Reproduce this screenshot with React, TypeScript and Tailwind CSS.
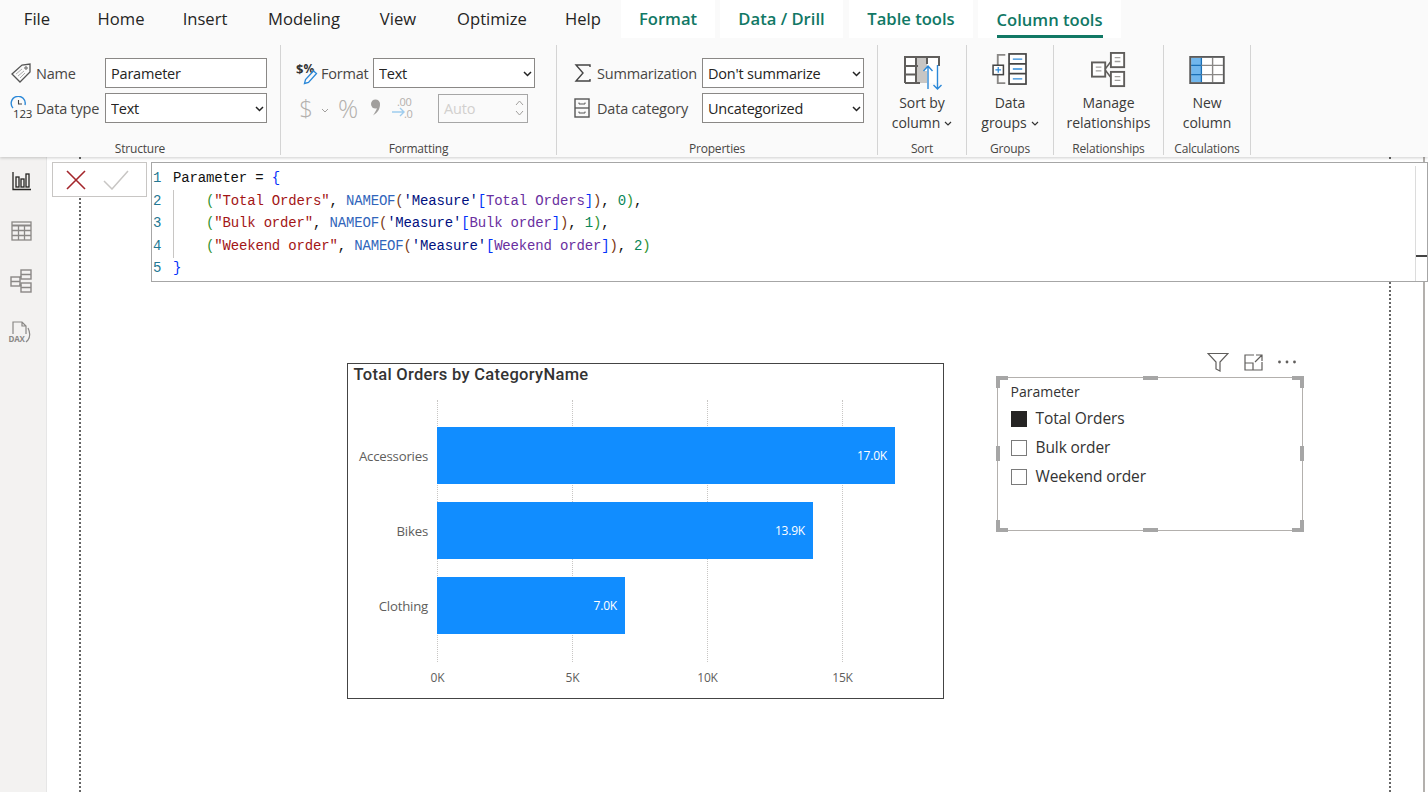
import React from "react";

const G = ({ c = "#605e5c", children, w, h, className = "" }: any) => (
  <svg width={w} height={h} viewBox={`0 0 ${w} ${h}`} fill="none" stroke={c} className={className}>{children}</svg>
);

const TagIcon = () => (
  <G w={22} h={22} c="#555">
    <path d="M2 12 L12 3 L20 2 L20 10 L10 20 Z" strokeWidth="1.3" />
    <circle cx="16" cy="6" r="1.2" strokeWidth="1" />
    <path d="M6 12 L12 7 M8 14 L14 9 M10 16 L15 11" strokeWidth="0.8" stroke="#999" />
  </G>
);
const TypeIcon = () => (
  <svg width="24" height="26" viewBox="0 0 24 26" fill="none">
    <path d="M3 12 A7 7 0 1 1 15 9" stroke="#2b88d8" strokeWidth="1.4" />
    <path d="M8.5 4 V8 H12" stroke="#444" strokeWidth="1.1" />
    <text x="3" y="22" fontSize="11.5" fill="#333" fontFamily="'Open Sans', sans-serif">123</text>
  </svg>
);
const FormatIcon = () => (
  <svg width="22" height="24" viewBox="0 0 22 24" fill="none">
    <text x="0" y="13" fontSize="13" fontWeight="700" fill="#333" fontFamily="'Open Sans', sans-serif">$</text>
    <text x="7.5" y="12" fontSize="12" fontWeight="700" fill="#333" fontFamily="'Open Sans', sans-serif">%</text>
    <path d="M8.5 22.5 L9.5 18.5 L17.5 10 L20.5 12.5 L12.5 21.5 Z" stroke="#2b88d8" strokeWidth="1.3" fill="#fafafa" />
  </svg>
);
const SigmaIcon = () => (
  <G w={18} h={20} c="#444">
    <path d="M16 4 V2 H2 L9 10 L2 18 H16 V16" strokeWidth="1.4" />
  </G>
);
const CabinetIcon = () => (
  <G w={16} h={20} c="#555">
    <rect x="1" y="1" width="14" height="18" strokeWidth="1.4" />
    <path d="M1 10 H15" strokeWidth="1.3" />
    <path d="M5 4.5 V6 H11 V4.5 M5 13.5 V15 H11 V13.5" strokeWidth="1" />
  </G>
);
const SortIcon = () => (
  <svg width="39" height="34" viewBox="0 0 39 34" fill="none">
    <rect x="1" y="1" width="34" height="26" fill="#fff" />
    <rect x="12" y="1" width="11" height="26" fill="#c8c6c4" />
    <path d="M1 27 V1 H35 V10 M1 10 H14 M1 18.5 H12 M1 27 H16 M12 1 V27 M23 1 V8" stroke="#605e5c" strokeWidth="2" />
    <path d="M24 33 V10 M19.5 15 L24 10 L28.5 15" stroke="#2b88d8" strokeWidth="1.4" fill="#fff" />
    <path d="M33.5 9 V33 M29.5 29 L33.5 33 L37.5 29" stroke="#2b88d8" strokeWidth="1.4" />
  </svg>
);
const GroupsIcon = () => (
  <svg width="36" height="32" viewBox="0 0 38 34" fill="none">
    <path d="M14 2 H6 V13 M6 23 V32 H14" stroke="#8a8886" strokeWidth="2" />
    <rect x="1" y="13" width="11" height="10" fill="#fff" stroke="#444" strokeWidth="1.6" />
    <path d="M3.5 18 H9.5 M6.5 15 V21" stroke="#2b88d8" strokeWidth="1.3" />
    <rect x="18" y="1" width="18" height="32" fill="#fff" stroke="#444" strokeWidth="1.8" />
    <path d="M18 11.5 H36 M18 22 H36" stroke="#444" strokeWidth="1.8" />
    <path d="M22 6.5 H32 M22 17 H32 M22 27.5 H32" stroke="#2b88d8" strokeWidth="1.4" />
  </svg>
);
const RelIcon = () => (
  <svg width="36" height="36" viewBox="0 0 38 38" fill="none">
    <rect x="21" y="1" width="14" height="15" fill="#fff" stroke="#605e5c" strokeWidth="2" />
    <rect x="21" y="21" width="14" height="15" fill="#fff" stroke="#605e5c" strokeWidth="2" />
    <rect x="1" y="11" width="14" height="15" fill="#fff" stroke="#605e5c" strokeWidth="2" />
    <path d="M15 18 L21 10 M15 19 L21 27" stroke="#605e5c" strokeWidth="1.6" />
    <path d="M25 6 H31 M25 10 H31 M25 26 H31 M25 30 H31 M5 16 H11 M5 20 H11" stroke="#a19f9d" strokeWidth="1.4" />
  </svg>
);
const NewColIcon = () => (
  <svg width="36" height="28" viewBox="0 0 38 30" fill="none">
    <rect x="1" y="1" width="36" height="28" fill="#fff" />
    <rect x="2" y="2" width="11" height="26" fill="#71b7ed" />
    <path d="M13 2 V28 M2 10 H13 M2 20 H13" stroke="#1a6fb5" strokeWidth="1.4" />
    <path d="M13 10 H36 M13 20 H36 M25 2 V28" stroke="#8a8886" strokeWidth="1.5" />
    <rect x="1" y="1" width="36" height="28" stroke="#5a5a5a" strokeWidth="2" />
  </svg>
);

const Caret = () => (
  <svg width="8" height="5" viewBox="0 0 8 5" fill="none" className="inline-block ml-1 mb-[2px]">
    <path d="M1 1 L4 4 L7 1" stroke="#333" strokeWidth="1.2" />
  </svg>
);

const tabsPlain = [
  ["File", "w-[74px]"],
  ["Home", "w-[94px]"],
  ["Insert", "w-[74px]"],
  ["Modeling", "w-[124px]"],
  ["View", "w-[64px]"],
  ["Optimize", "w-[124px]"],
  ["Help", "w-[58px]"],
];

const Field = "h-[30px] border border-[#8a8886] bg-white text-[14.5px] text-[#252423] pl-[5px] pt-[1px] outline-none";

function Select({ value }: { value: string }) {
  return (
    <div className="relative w-[162px] h-[30px] shrink-0">
      <select defaultValue={value} className={`${Field} w-full appearance-none`}>
        <option>{value}</option>
      </select>
      <svg width="9" height="6" viewBox="0 0 9 6" fill="none" className="absolute right-[3px] top-[13px] pointer-events-none">
        <path d="M1 1 L4.5 4.5 L8 1" stroke="#222" strokeWidth="1.5" />
      </svg>
    </div>
  );
}

function Group({ w, label, children }: any) {
  return (
    <div className={`${w} h-[110px] mt-[45px] border-r border-[#d4d4d4] flex flex-col shrink-0`}>
      <div className="flex-1 min-h-0">{children}</div>
      <div className="h-[13px] text-center text-[12px] leading-[13px] text-[#484644]">{label}</div>
    </div>
  );
}

function BigButton({ icon, l1, l2, caret, pad }: any) {
  return (
    <div className="flex flex-col items-center tracking-[-0.05px]">
      <div className={`h-[48px] flex items-start justify-center ${pad}`}>{icon}</div>
      <div className="text-[14px] leading-[20px] text-center text-[#3b3a39] whitespace-nowrap">{l1}</div>
      <div className="text-[14px] leading-[20px] text-center text-[#3b3a39] whitespace-nowrap">
        {l2}
        {caret && <Caret />}
      </div>
    </div>
  );
}

const S = ({ c, children }: any) => <span style={{ color: c }}>{children}</span>;
const BLUE = "#0431fa";
const GRN = "#319331";
const BRN = "#7b3814";
const STR = "#a31515";
const FN = "#3165bb";
const TBL = "#001080";
const COL = "#6a2fa0";
const NUM = "#098658";

function MeasureLine({ text, name, num, comma }: any) {
  return (
    <span className="ml-[33px]">
      <S c={GRN}>(</S>
      <S c={STR}>"{text}"</S>, <S c={FN}>NAMEOF</S>
      <S c={BRN}>(</S>
      <S c={TBL}>'Measure'</S>
      <S c={BLUE}>[</S>
      <S c={COL}>{name}</S>
      <S c={BLUE}>]</S>
      <S c={BRN}>)</S>, <S c={NUM}>{num}</S>
      <S c={GRN}>)</S>
      {comma ? "," : ""}
    </span>
  );
}

const codeLines = [
  <>Parameter = <S c={BLUE}>{"{"}</S></>,
  <MeasureLine text="Total Orders" name="Total Orders" num="0" comma />,
  <MeasureLine text="Bulk order" name="Bulk order" num="1" comma />,
  <MeasureLine text="Weekend order" name="Weekend order" num="2" />,
  <S c={BLUE}>{"}"}</S>,
];

const bars = [
  { name: "Accessories", value: "17.0K", width: 458 },
  { name: "Bikes", value: "13.9K", width: 376 },
  { name: "Clothing", value: "7.0K", width: 188 },
];
const ticks = ["0K", "5K", "10K", "15K"];

function Handle({ className }: { className: string }) {
  return <div className={`absolute bg-[#a6a6a6] ${className}`} />;
}

function Check({ on, label }: { on?: boolean; label: string }) {
  return (
    <div className="flex items-center h-[29px]">
      <div className={`w-[16px] h-[16px] border ${on ? "bg-[#252423] border-[#252423]" : "bg-white border-[#7a7a7a]"}`} />
      <span className="ml-[9px] text-[15.5px] tracking-[-0.1px] text-[#333]">{label}</span>
    </div>
  );
}

export default function App() {
  return (
    <div className="w-[1428px] h-[792px] overflow-hidden bg-white flex flex-col font-['Open_Sans',sans-serif] tracking-[-0.2px]">
      {/* Ribbon */}
      <header className="relative z-10 h-[157px] bg-[#fafafa] shadow-[0_1px_3px_rgba(0,0,0,0.2)] shrink-0">
        <nav className="absolute left-0 top-0 flex h-[38px] items-center tracking-normal">
          {tabsPlain.map(([t, w]) => (
            <div key={t} className={`${w} text-center text-[16.6px] text-[#252423] pt-[1px]`}>{t}</div>
          ))}
          <div className="ml-[9px] w-[94px] h-[38px] bg-white flex items-center justify-center pt-[1px] text-[16.6px] font-semibold text-[#117865]">Format</div>
          <div className="ml-[5px] w-[123px] h-[38px] bg-white flex items-center justify-center pt-[1px] text-[16.6px] font-semibold text-[#117865]">Data / Drill</div>
          <div className="ml-[6px] w-[124px] h-[38px] bg-white flex items-center justify-center pt-[1px] text-[16.6px] font-semibold text-[#117865]">Table tools</div>
          <div className="ml-[5px] w-[143px] h-[38px] bg-white flex justify-center">
            <div className="h-[38px] pt-[9px] border-b-[3px] border-[#117865] mb-[2px] text-[16.6px] leading-[22px] font-semibold text-[#117865] w-[106px] flex justify-center whitespace-nowrap">Column tools</div>
          </div>
        </nav>
        <div className="flex">
          <Group w="w-[281px]" label="Structure">
            <div className="pt-[13px] pl-[10px] flex flex-col gap-[5px]">
              <div className="flex items-center h-[30px]">
                <div className="w-[26px]"><TagIcon /></div>
                <span className="w-[69px] pt-[1px] text-[14.5px] text-[#484644]">Name</span>
                <input readOnly value="Parameter" className={`${Field} w-[162px]`} />
              </div>
              <div className="flex items-center h-[30px]">
                <div className="w-[26px] mt-[2px]"><TypeIcon /></div>
                <span className="w-[69px] pt-[1px] text-[14.5px] text-[#484644] whitespace-nowrap">Data type</span>
                <Select value="Text" />
              </div>
            </div>
          </Group>
          <Group w="w-[276px]" label="Formatting">
            <div className="pt-[13px] pl-[15px] flex flex-col gap-[5px]">
              <div className="flex items-center h-[30px]">
                <div className="w-[25px]"><FormatIcon /></div>
                <span className="w-[52px] pt-[1px] text-[14.5px] text-[#484644]">Format</span>
                <Select value="Text" />
              </div>
              <div className="flex items-center h-[30px] text-[#b3b0ad]">
                <span className="w-[20px] text-[24px] leading-[30px] font-light text-center">$</span>
                <svg width="8" height="5" viewBox="0 0 8 5" fill="none" className="ml-[5px] mt-[4px]"><path d="M1 1 L4 4 L7 1" stroke="#a19f9d" /></svg>
                <span className="ml-[6px] w-[26px] text-[25px] leading-[30px] font-light text-center">%</span>
                <svg width="11" height="17" viewBox="0 0 11 17" fill="#a19f9d" className="ml-[9px] mb-[1px]">
                  <circle cx="5.5" cy="5" r="4.5" />
                  <path d="M7 1 C11.5 4 11 12 3 16.5 C6 12 7 10 7 8 Z" />
                </svg>
                <svg width="24" height="28" viewBox="0 0 24 28" fill="none" className="ml-[10px]">
                  <text x="6" y="12" fontSize="11" letterSpacing="-0.3" fill="#b3b0ad">.00</text>
                  <text x="13" y="24" fontSize="11" letterSpacing="-0.3" fill="#b3b0ad">.0</text>
                  <path d="M1 18 H13 M9 14 L13 18 L9 22" stroke="#9fcdee" strokeWidth="1.4" />
                </svg>
                <div className="ml-[23px] w-[90px] h-[29px] border border-[#a6a6a6] bg-[#fafafa] flex items-center">
                  <span className="flex-1 pl-[5px] pt-[1px] text-[14.5px] text-[#d2d0ce]">Auto</span>
                  <div className="w-[16px] flex flex-col gap-[4px] items-center">
                    <svg width="9" height="6" viewBox="0 0 9 6" fill="none"><path d="M1 5 L4.5 1 L8 5" stroke="#a19f9d" /></svg>
                    <svg width="9" height="6" viewBox="0 0 9 6" fill="none"><path d="M1 1 L4.5 5 L8 1" stroke="#a19f9d" /></svg>
                  </div>
                </div>
              </div>
            </div>
          </Group>
          <Group w="w-[321px]" label="Properties">
            <div className="pt-[13px] pl-[17px] flex flex-col gap-[5px]">
              <div className="flex items-center h-[30px]">
                <div className="w-[23px]"><SigmaIcon /></div>
                <span className="w-[105px] pt-[1px] text-[14.5px] text-[#484644] whitespace-nowrap">Summarization</span>
                <Select value="Don't summarize" />
              </div>
              <div className="flex items-center h-[30px]">
                <div className="w-[23px]"><CabinetIcon /></div>
                <span className="w-[105px] pt-[1px] text-[14.5px] text-[#484644] whitespace-nowrap">Data category</span>
                <Select value="Uncategorized" />
              </div>
            </div>
          </Group>
          <Group w="w-[89px]" label="Sort"><BigButton pad="pt-[11px] pl-[2px]" icon={<SortIcon />} l1="Sort by" l2="column" caret /></Group>
          <Group w="w-[87px]" label="Groups"><BigButton pad="pt-[8px]" icon={<GroupsIcon />} l1="Data" l2="groups" caret /></Group>
          <Group w="w-[110px]" label="Relationships"><BigButton pad="pt-[7px]" icon={<RelIcon />} l1="Manage" l2="relationships" /></Group>
          <Group w="w-[87px]" label="Calculations"><BigButton pad="pt-[11px]" icon={<NewColIcon />} l1="New" l2="column" /></Group>
        </div>
      </header>

      {/* Body */}
      <div className="flex flex-1 min-h-0">
        <aside className="w-[47px] shrink-0 bg-[#f3f2f1] border-r border-[#e6e6e6] flex flex-col items-center pt-[14px] gap-[30px] pr-[3px]">
          <svg width="20" height="20" viewBox="0 0 20 20" fill="none" stroke="#252423" strokeWidth="1.3">
            <path d="M1 1 V18.5 H19" /><rect x="4" y="6" width="3" height="10" /><rect x="9" y="8" width="3" height="8" /><rect x="14" y="3" width="3" height="13" />
          </svg>
          <svg width="21" height="20" viewBox="0 0 21 20" fill="none" stroke="#8a8886" strokeWidth="1.3">
            <rect x="1" y="1" width="19" height="18" /><path d="M1 4.5 H20" strokeWidth="2" /><path d="M1 9.5 H20 M1 14.5 H20 M7.5 4.5 V19 M13.5 4.5 V19" />
          </svg>
          <svg width="23" height="24" viewBox="0 0 23 24" fill="none" stroke="#8a8886" strokeWidth="1.4" className="mt-[-2px]">
            <rect x="1" y="8" width="9" height="9" /><rect x="11" y="1" width="10" height="9" /><rect x="11" y="14" width="10" height="9" />
            <path d="M1 12.5 H10 M11 5.5 H21 M11 18.5 H21 M10 9 L11 7 M10 15 L11 17" />
          </svg>
          <svg width="24" height="24" viewBox="0 0 24 24" fill="none" stroke="#8a8886" strokeWidth="1.2" className="mt-[-3px] -translate-x-[2px]">
            <path d="M5 14 V2 H14 L18 6 V14 M14 2 V6 H18" />
            <path d="M20 8 C22 12 22 17 20 20 L18 22" />
            <text x="0.5" y="22" fontSize="8" fontWeight="700" fill="#8a8886" stroke="none" fontFamily="'Open Sans', sans-serif">DAX</text>
          </svg>
        </aside>

        <main className="relative flex-1 bg-white overflow-hidden">
          {/* page bounds */}
          <div className="absolute left-[32px] top-0 bottom-0 border-l-2 border-dotted border-[#666]" />
          <div className="absolute left-[1342px] top-0 bottom-0 border-l-2 border-dotted border-[#666]" />
          <div className="absolute left-[1376px] top-0 bottom-0 w-[1.5px] bg-[#b3b0ad]" />

          {/* formula bar */}
          <div className="absolute left-[5px] top-[5px] right-0 flex items-start z-10">
            <div className="w-[95px] h-[35px] bg-white border border-[#c8c6c4] flex items-center pl-[13px] gap-[17px] shrink-0">
              <svg width="20" height="20" viewBox="0 0 20 20" fill="none"><path d="M1 1 L19 19 M19 1 L1 19" stroke="#a4262c" strokeWidth="1.6" /></svg>
              <svg width="26" height="20" viewBox="0 0 26 20" fill="none"><path d="M1 11 L9 19 L25 1" stroke="#c8c6c4" strokeWidth="1.5" /></svg>
            </div>
            <div className="relative ml-[4px] flex-1 h-[120px] bg-white border border-[#a6a6a6] pt-[4px] font-['Liberation_Mono',monospace] text-[14px] leading-[22.5px] tracking-[-0.17px] text-[#111]">
              {codeLines.map((l, i) => (
                <div key={i} className="flex h-[22.5px] whitespace-pre">
                  <span className="w-[21px] pl-[1px] text-[#237893] shrink-0">{i + 1}</span>
                  <span>{l}</span>
                </div>
              ))}
              <div className="absolute left-[21px] top-[27px] h-[68px] w-[1px] bg-[#c8c6c4]" />
              <div className="absolute right-0 top-[3px] bottom-0 w-[12px] border-l border-[#dcdcdc]" />
              <div className="absolute right-0 top-[92px] h-[2px] w-[11px] bg-[#444]" />
            </div>
          </div>

          {/* chart */}
          <section className="absolute left-[300px] top-[206px] w-[597px] h-[336px] border-[1.5px] border-[#444] bg-white">
            <h2 className="absolute left-[5.5px] top-[0px] text-[16.5px] leading-[21px] font-medium tracking-[0.3px] text-[#333] font-['Roboto',sans-serif] whitespace-nowrap">Total Orders by CategoryName</h2>
            {[0, 135, 270, 405].map((x) => (
              <div key={x} style={{ left: 89 + x }} className="absolute top-[36px] h-[262px] border-l border-dotted border-[#c8c6c4]" />
            ))}
            <div className="absolute left-0 right-0 top-[63px] flex flex-col gap-[18px]">
              {bars.map((b) => (
                <div key={b.name} className="flex items-center h-[57px]">
                  <div className="w-[80px] pt-[2px] text-right text-[13.2px] text-[#605e5c] whitespace-nowrap">{b.name}</div>
                  <div style={{ width: b.width }} className="ml-[9px] h-[57px] bg-[#118dff] flex items-center justify-end pr-[8px] text-[12px] font-medium text-white">{b.value}</div>
                </div>
              ))}
            </div>
            <div className="absolute left-[89px] top-[305px] flex">
              {ticks.map((t) => (
                <div key={t} className="w-[135px] text-[12px] text-[#605e5c] -translate-x-[67px] text-center">{t}</div>
              ))}
            </div>
          </section>

          {/* slicer toolbar */}
          <div className="absolute left-[1160px] top-[195px] w-[90px] flex items-center justify-between">
            <svg width="22" height="20" viewBox="0 0 22 20" fill="none" stroke="#605e5c" strokeWidth="1.2"><path d="M1 1.5 H21 L13 10 V19 L9 17 V10 Z" /></svg>
            <svg width="19" height="17" viewBox="0 0 19 17" fill="none" stroke="#605e5c" strokeWidth="1.2"><path d="M10 1 H1 V16 H18 V8 M1 9 H9 V16 M12 1 H18 V7 M18 1 L11 8" /></svg>
            <svg width="20" height="4" viewBox="0 0 20 4" fill="#605e5c"><circle cx="2.5" cy="2" r="1.4" /><circle cx="10" cy="2" r="1.4" /><circle cx="17.5" cy="2" r="1.4" /></svg>
          </div>

          {/* slicer */}
          <section className="absolute left-[950px] top-[220px] w-[306px] h-[154px] border-[1.5px] border-[#b3b0ad] bg-white pl-[12.5px] pt-[4px]">
            <div className="text-[14px] leading-[20px] tracking-normal text-[#333] mb-[2px]">Parameter</div>
            <Check on label="Total Orders" />
            <Check label="Bulk order" />
            <Check label="Weekend order" />
            <Handle className="left-[-2px] top-[-2px] w-[12px] h-[4px]" />
            <Handle className="left-[-2px] top-[-2px] w-[4px] h-[12px]" />
            <Handle className="right-[-2px] top-[-2px] w-[12px] h-[4px]" />
            <Handle className="right-[-2px] top-[-2px] w-[4px] h-[12px]" />
            <Handle className="left-[-2px] bottom-[-2px] w-[12px] h-[4px]" />
            <Handle className="left-[-2px] bottom-[-2px] w-[4px] h-[12px]" />
            <Handle className="right-[-2px] bottom-[-2px] w-[12px] h-[4px]" />
            <Handle className="right-[-2px] bottom-[-2px] w-[4px] h-[12px]" />
            <Handle className="left-[145px] top-[-2px] w-[15px] h-[4px]" />
            <Handle className="left-[145px] bottom-[-2px] w-[15px] h-[4px]" />
            <Handle className="left-[-2px] top-[68px] w-[4px] h-[15px]" />
            <Handle className="right-[-2px] top-[68px] w-[4px] h-[15px]" />
          </section>
        </main>
      </div>
    </div>
  );
}
